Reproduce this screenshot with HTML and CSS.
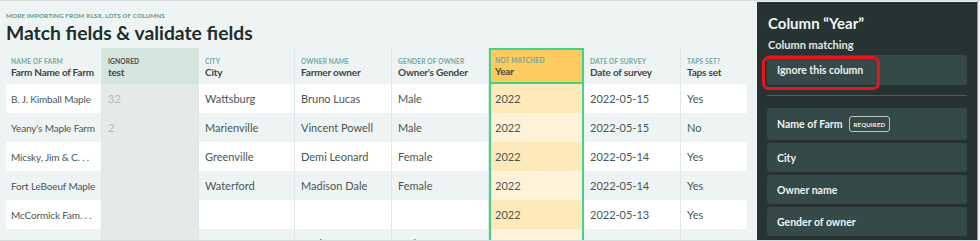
FILE: index.html
```html
<!DOCTYPE html>
<html>
<head>
<meta charset="utf-8">
<link rel="stylesheet" href="styles.css">
</head>
<body>
<div class="frame">
  <main class="main">
    <div class="eyebrow">MORE IMPORTING FROM XLSX, LOTS OF COLUMNS</div>
    <h1 class="title">Match fields &amp; validate fields</h1>
    <div class="table-wrap">
      <div class="table">
        <div class="row head">
          <div class="cell"><span class="lbl">Name of Farm</span><span class="name">Farm Name of Farm</span></div>
          <div class="cell ign"><span class="lbl dark">Ignored</span><span class="name">test</span></div>
          <div class="cell"><span class="lbl">City</span><span class="name">City</span></div>
          <div class="cell"><span class="lbl">Owner name</span><span class="name">Farmer owner</span></div>
          <div class="cell"><span class="lbl">Gender of owner</span><span class="name">Owner's Gender</span></div>
          <div class="cell yr"><span class="lbl">Not matched</span><span class="name">Year</span></div>
          <div class="cell"><span class="lbl">Date of survey</span><span class="name">Date of survey</span></div>
          <div class="cell"><span class="lbl">Taps set?</span><span class="name">Taps set</span></div>
        </div>
        <div class="row">
          <div class="cell">B. J. Kimball Maple</div>
          <div class="cell ign muted">32</div>
          <div class="cell">Wattsburg</div>
          <div class="cell">Bruno Lucas</div>
          <div class="cell">Male</div>
          <div class="cell yr">2022</div>
          <div class="cell">2022-05-15</div>
          <div class="cell">Yes</div>
        </div>
        <div class="row alt">
          <div class="cell">Yeany's Maple Farm</div>
          <div class="cell ign muted">2</div>
          <div class="cell">Marienville</div>
          <div class="cell">Vincent Powell</div>
          <div class="cell">Male</div>
          <div class="cell yr">2022</div>
          <div class="cell">2022-05-15</div>
          <div class="cell">No</div>
        </div>
        <div class="row">
          <div class="cell">Micsky, Jim &amp; C. . .</div>
          <div class="cell ign"></div>
          <div class="cell">Greenville</div>
          <div class="cell">Demi Leonard</div>
          <div class="cell">Female</div>
          <div class="cell yr">2022</div>
          <div class="cell">2022-05-14</div>
          <div class="cell">Yes</div>
        </div>
        <div class="row alt">
          <div class="cell">Fort LeBoeuf Maple</div>
          <div class="cell ign"></div>
          <div class="cell">Waterford</div>
          <div class="cell">Madison Dale</div>
          <div class="cell">Female</div>
          <div class="cell yr">2022</div>
          <div class="cell">2022-05-14</div>
          <div class="cell">Yes</div>
        </div>
        <div class="row">
          <div class="cell">McCormick Fam. . .</div>
          <div class="cell ign"></div>
          <div class="cell"></div>
          <div class="cell"></div>
          <div class="cell"></div>
          <div class="cell yr">2022</div>
          <div class="cell">2022-05-13</div>
          <div class="cell">Yes</div>
        </div>
        <div class="row alt">
          <div class="cell">Hastings's Maple</div>
          <div class="cell ign"></div>
          <div class="cell">Corry</div>
          <div class="cell">Kevin Stuart</div>
          <div class="cell">Male</div>
          <div class="cell yr">2022</div>
          <div class="cell">2022-05-13</div>
          <div class="cell">Yes</div>
        </div>
      </div>
    </div>
  </main>
  <aside class="panel">
    <h2 class="panel-title">Column “Year”</h2>
    <div class="panel-sub">Column matching</div>
    <div class="opt opt-ignore">Ignore this column<span class="highlight"></span></div>
    <div class="divider"></div>
    <div class="list">
      <div class="opt">Name of Farm <span class="badge">Required</span></div>
      <div class="opt">City</div>
      <div class="opt">Owner name</div>
      <div class="opt">Gender of owner</div>
    </div>
  </aside>
  <div class="edge"></div>
</div>
</body>
</html>
```
FILE: styles.css
```css
* { box-sizing: border-box; margin: 0; padding: 0; }
html, body { width: 980px; height: 241px; overflow: hidden; background: #eef4f3; }
body { font-family: Lato, "Open Sans", sans-serif; }

.frame {
  display: flex;
  width: 980px;
  height: 241px;
  border-top: 1px solid #d6dcdc;
  border-bottom: 1px solid #d6dcdc;
  background: #eef4f3;
  overflow: hidden;
}

.main {
  width: 757px;
  flex: none;
  padding: 11px 0 0 6px;
}

.eyebrow {
  font-size: 6.3px;
  font-weight: 700;
  color: #5f968a;
  letter-spacing: 0.12px;
  line-height: 8px;
}

.title {
  font-size: 19.3px;
  font-weight: 700;
  color: #1f2d2b;
  line-height: 22px;
  margin-top: 2px;
}

.table-wrap {
  margin-top: 4px;
  width: 741px;
  overflow: hidden;
}

.table { width: 778px; }

.row {
  display: grid;
  grid-template-columns: 96px 97px 96px 97px 97px 95px 97px 97px;
  height: 29px;
  background: #ffffff;
}
.row.alt { background: #eef4f3; }
.row.head { height: 36px; background: #eef4f3; }

.cell {
  display: flex;
  align-items: center;
  padding: 0 6px;
  border-right: 1px solid #dfe8e6;
  font-size: 11px;
  color: #4b5653;
  white-space: nowrap;
  overflow: hidden;
}
.row .cell:first-child {
  padding-left: 5px;
  font-size: 10px;
  letter-spacing: -0.15px;
}
.head .cell {
  flex-direction: column;
  align-items: flex-start;
  justify-content: center;
  padding-top: 3px;
}
.head .cell:first-child { letter-spacing: 0; font-size: 11px; }

.lbl {
  font-size: 6.6px;
  font-weight: 700;
  text-transform: uppercase;
  color: #78a79d;
  letter-spacing: 0.15px;
  line-height: 8px;
}
.lbl.dark { color: #3f4e4a; }
.name {
  font-size: 10px;
  font-weight: 700;
  color: #3b4845;
  line-height: 14px;
  letter-spacing: -0.2px;
}
.head .cell:first-child .name { letter-spacing: -0.25px; }

.ign { background: #e5eae9; }
.head .ign { background: #d4e5dd; }
.muted { color: #b3bbb9; }

.yr {
  background: #fde9ba;
  border-left: 2px solid #41d38c;
  border-right: 2px solid #41d38c;
  padding-left: 4px;
}
.alt .yr { background: #fef2d8; }
.head .yr {
  background: #fcca5f;
  border-top: 2px solid #41d38c;
  border-bottom: 2px solid #41d38c;
  padding-top: 1px;
}

.panel {
  width: 220px;
  flex: none;
  background: #263332;
  margin-top: 1px;
  padding: 12px 10px 0 10px;
}

.panel-title {
  font-size: 15px;
  font-weight: 700;
  color: #f1f5f4;
  line-height: 18px;
  padding-left: 1px;
}

.panel-sub {
  font-size: 11px;
  font-weight: 700;
  color: #e0e8e6;
  line-height: 14px;
  margin-top: 6px;
  padding-left: 1px;
}

.opt {
  position: relative;
  display: flex;
  align-items: center;
  height: 29px;
  padding-left: 10px;
  background: #354949;
  border-radius: 3px;
  font-size: 10.5px;
  font-weight: 700;
  color: #eef3f2;
}

.opt-ignore { margin-top: 3px; height: 30px; }

.highlight {
  position: absolute;
  left: -5px;
  top: 1px;
  width: 118px;
  height: 34px;
  border: 3.5px solid #e8141b;
  border-radius: 7px;
}

.divider {
  height: 1px;
  background: #4c5b5a;
  margin-top: 10px;
}

.list {
  display: flex;
  flex-direction: column;
  gap: 3px;
  margin-top: 12px;
}
.list .opt:first-child { height: 32px; }

.badge {
  margin-left: 6px;
  font-size: 6px;
  font-weight: 700;
  text-transform: uppercase;
  letter-spacing: 0.2px;
  border: 1px solid #b8c5c3;
  border-radius: 3px;
  padding: 0 4px;
  height: 16px;
  display: inline-flex;
  align-items: center;
  color: #eef3f2;
}

.edge {
  width: 3px;
  flex: none;
  border-left: 1px solid #36c88c;
  background: #eef1f1;
}
```
